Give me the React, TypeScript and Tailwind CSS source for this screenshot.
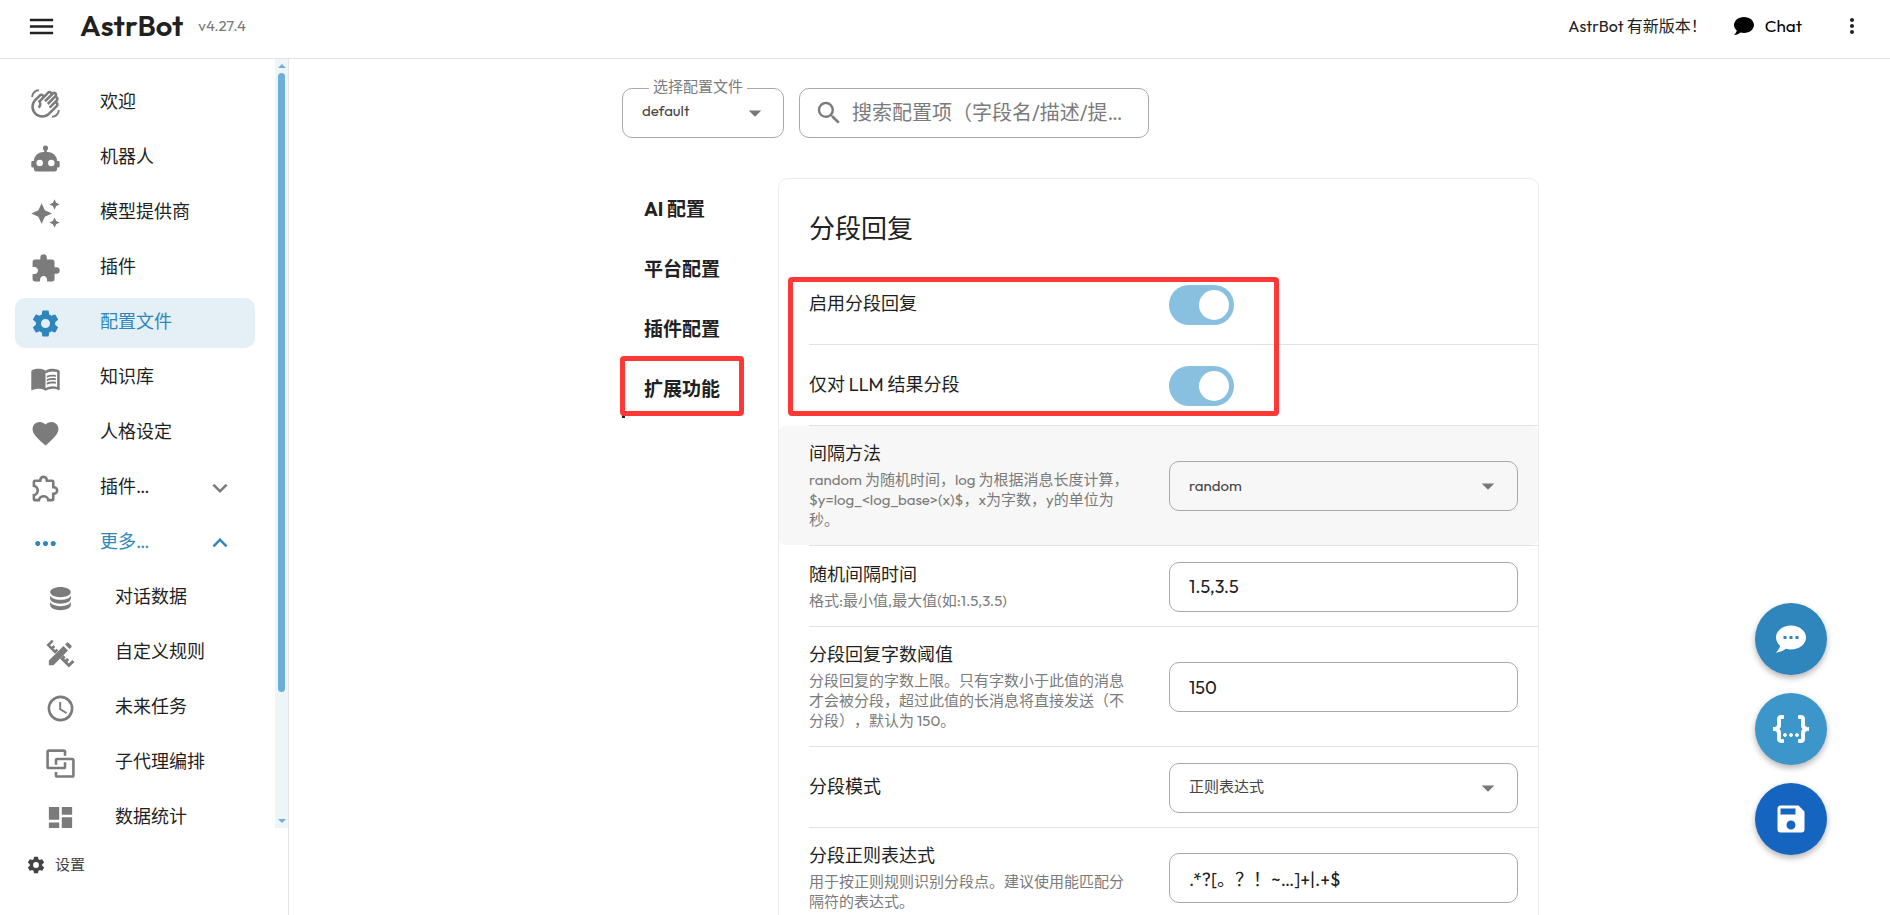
import { useState, type ReactNode } from "react";
import { MdOutlineWavingHand, MdMenuBook, MdFavorite, MdMoreHoriz, MdSearch, MdMoreVert } from "react-icons/md";

const ICONS = {
  menu: "M3,6H21V8H3V6M3,11H21V13H3V11M3,16H21V18H3V16Z",
  robot:
    "M12,2A2,2 0 0,1 14,4C14,4.74 13.6,5.39 13,5.73V7H14A7,7 0 0,1 21,14H22A1,1 0 0,1 23,15V18A1,1 0 0,1 22,19H21V20A2,2 0 0,1 19,22H5A2,2 0 0,1 3,20V19H2A1,1 0 0,1 1,18V15A1,1 0 0,1 2,14H3A7,7 0 0,1 10,7H11V5.73C10.4,5.39 10,4.74 10,4A2,2 0 0,1 12,2M7.5,13A2.5,2.5 0 0,0 5,15.5A2.5,2.5 0 0,0 7.5,18A2.5,2.5 0 0,0 10,15.5A2.5,2.5 0 0,0 7.5,13M16.5,13A2.5,2.5 0 0,0 14,15.5A2.5,2.5 0 0,0 16.5,18A2.5,2.5 0 0,0 19,15.5A2.5,2.5 0 0,0 16.5,13Z",
  creation:
    "M19,1L17.74,3.75L15,5L17.74,6.26L19,9L20.25,6.26L23,5L20.25,3.75M9,4L6.5,9.5L1,12L6.5,14.5L9,20L11.5,14.5L17,12L11.5,9.5M19,15L17.74,17.74L15,19L17.74,20.25L19,23L20.25,20.25L23,19L20.25,17.74",
  puzzle:
    "M20.5,11H19V7C19,5.89 18.1,5 17,5H13V3.5A2.5,2.5 0 0,0 10.5,1A2.5,2.5 0 0,0 8,3.5V5H4A2,2 0 0,0 2,7V10.8H3.5C5,10.8 6.2,12 6.2,13.5C6.2,15 5,16.2 3.5,16.2H2V20A2,2 0 0,0 4,22H7.8V20.5C7.8,19 9,17.8 10.5,17.8C12,17.8 13.2,19 13.2,20.5V22H17A2,2 0 0,0 19,20V16H20.5A2.5,2.5 0 0,0 23,13.5A2.5,2.5 0 0,0 20.5,11Z",
  puzzleOutline:
    "M22,13.5C22,15.26 20.7,16.72 19,16.96V20A2,2 0 0,1 17,22H13.2V21.7A2.7,2.7 0 0,0 10.5,19C9,19 7.8,20.21 7.8,21.7V22H4A2,2 0 0,1 2,20V16.2H2.3C3.79,16.2 5,15 5,13.5C5,12 3.79,10.8 2.3,10.8H2V7A2,2 0 0,1 4,5H7.04C7.28,3.3 8.74,2 10.5,2C12.26,2 13.72,3.3 13.96,5H17A2,2 0 0,1 19,7V10.04C20.7,10.28 22,11.74 22,13.5M17,15H18.5A1.5,1.5 0 0,0 20,13.5A1.5,1.5 0 0,0 18.5,12H17V7H12V5.5A1.5,1.5 0 0,0 10.5,4A1.5,1.5 0 0,0 9,5.5V7H4V9.12C5.76,9.8 7,11.5 7,13.5C7,15.5 5.75,17.2 4,17.88V20H6.12C6.8,18.25 8.5,17 10.5,17C12.5,17 14.2,18.25 14.88,20H17V15Z",
  cog: "M12,15.5A3.5,3.5 0 0,1 8.5,12A3.5,3.5 0 0,1 12,8.5A3.5,3.5 0 0,1 15.5,12A3.5,3.5 0 0,1 12,15.5M19.43,12.97C19.47,12.65 19.5,12.33 19.5,12C19.5,11.67 19.47,11.34 19.43,11L21.54,9.37C21.73,9.22 21.78,8.95 21.66,8.73L19.66,5.27C19.54,5.05 19.27,4.96 19.05,5.05L16.56,6.05C16.04,5.66 15.5,5.32 14.87,5.07L14.5,2.42C14.46,2.18 14.25,2 14,2H10C9.75,2 9.54,2.18 9.5,2.42L9.13,5.07C8.5,5.32 7.96,5.66 7.44,6.05L4.95,5.05C4.73,4.96 4.46,5.05 4.34,5.27L2.34,8.73C2.21,8.95 2.27,9.22 2.46,9.37L4.57,11C4.53,11.34 4.5,11.67 4.5,12C4.5,12.33 4.53,12.65 4.57,12.97L2.46,14.63C2.27,14.78 2.21,15.05 2.34,15.27L4.34,18.73C4.46,18.95 4.73,19.03 4.95,18.95L7.44,17.94C7.96,18.34 8.5,18.68 9.13,18.93L9.5,21.58C9.54,21.82 9.75,22 10,22H14C14.25,22 14.46,21.82 14.5,21.58L14.87,18.93C15.5,18.67 16.04,18.34 16.56,17.94L19.05,18.95C19.27,19.03 19.54,18.95 19.66,18.73L21.66,15.27C21.78,15.05 21.73,14.78 21.54,14.63L19.43,12.97Z",
  database:
    "M12,3C7.58,3 4,4.79 4,7C4,9.21 7.58,11 12,11C16.42,11 20,9.21 20,7C20,4.79 16.42,3 12,3M4,9V12C4,14.21 7.58,16 12,16C16.42,16 20,14.21 20,12V9C20,11.21 16.42,13 12,13C7.58,13 4,11.21 4,9M4,14V17C4,19.21 7.58,21 12,21C16.42,21 20,19.21 20,17V14C20,16.21 16.42,18 12,18C7.58,18 4,16.21 4,14Z",
  clock:
    "M12,20A8,8 0 0,0 20,12A8,8 0 0,0 12,4A8,8 0 0,0 4,12A8,8 0 0,0 12,20M12,2A10,10 0 0,1 22,12A10,10 0 0,1 12,22C6.47,22 2,17.5 2,12A10,10 0 0,1 12,2M12.5,7V12.25L17,14.92L16.25,16.15L11,13V7H12.5Z",
  dashboard: "M13,3V9H21V3M13,21H21V11H13M3,21H11V15H3M3,13H11V3H3V13Z",
  chevronDown: "M7.41,8.58L12,13.17L16.59,8.58L18,10L12,16L6,10L7.41,8.58Z",
  chevronUp: "M7.41,15.41L12,10.83L16.59,15.41L18,14L12,8L6,14L7.41,15.41Z",
  caret: "M7,10L12,15L17,10H7Z",
  chat: "M12,3C17.5,3 22,6.58 22,11C22,15.42 17.5,19 12,19C10.76,19 9.57,18.82 8.47,18.5C5.55,21 2,21 2,21C4.33,18.67 4.7,17.1 4.75,16.5C3.05,15.07 2,13.13 2,11C2,6.58 6.5,3 12,3Z",
  chatDots:
    "M12,3C17.5,3 22,6.58 22,11C22,15.42 17.5,19 12,19C10.76,19 9.57,18.82 8.47,18.5C5.55,21 2,21 2,21C4.33,18.67 4.7,17.1 4.75,16.5C3.05,15.07 2,13.13 2,11C2,6.58 6.5,3 12,3M17,12V10H15V12H17M13,12V10H11V12H13M9,12V10H7V12H9Z",
  json: "M5,3H7V5H5V10A2,2 0 0,1 3,12A2,2 0 0,1 5,14V19H7V21H5C3.93,20.73 3,20.1 3,19V15A2,2 0 0,0 1,13H0V11H1A2,2 0 0,0 3,9V5A2,2 0 0,1 5,3M19,3A2,2 0 0,1 21,5V9A2,2 0 0,0 23,11H24V13H23A2,2 0 0,0 21,15V19A2,2 0 0,1 19,21H17V19H19V14A2,2 0 0,1 21,12A2,2 0 0,1 19,10V5H17V3H19M12,15A1,1 0 0,1 13,16A1,1 0 0,1 12,17A1,1 0 0,1 11,16A1,1 0 0,1 12,15M8,15A1,1 0 0,1 9,16A1,1 0 0,1 8,17A1,1 0 0,1 7,16A1,1 0 0,1 8,15M16,15A1,1 0 0,1 17,16A1,1 0 0,1 16,17A1,1 0 0,1 15,16A1,1 0 0,1 16,15Z",
  save: "M15,9H5V5H15M12,19A3,3 0 0,1 9,16A3,3 0 0,1 12,13A3,3 0 0,1 15,16A3,3 0 0,1 12,19M17,3H5C3.89,3 3,3.9 3,5V19A2,2 0 0,0 5,21H19A2,2 0 0,0 21,19V7L17,3Z",
};

function Icon({ name, className }: { name: keyof typeof ICONS; className: string }) {
  return (
    <svg viewBox="0 0 24 24" className={className} fill="currentColor" aria-hidden="true">
      <path d={ICONS[name]} />
    </svg>
  );
}

function LinkedSquares() {
  return (
    <svg viewBox="0 0 24 24" className="size-[31px]" fill="none" stroke="currentColor" strokeWidth="2" aria-hidden="true">
      <path d="M15.5 6V3a1 1 0 0 0-1-1H3a1 1 0 0 0-1 1v11.5a1 1 0 0 0 1 1h11.5a1 1 0 0 0 1-1V11" />
      <path d="M8.500 13V9.500a1 1 0 0 1 1-1H21a1 1 0 0 1 1 1V21a1 1 0 0 1-1 1H9.500a1 1 0 0 1-1-1v-2.500" />
    </svg>
  );
}

function PencilRuler() {
  return (
    <svg viewBox="0 0 24 24" className="size-[31px]" fill="currentColor" aria-hidden="true">
      <path d="M3 17.500L14.300 6.200L17.800 9.700L6.500 21H3Z" />
      <path d="M15.500 5L16.900 3.600Q17.500 3 18.100 3.600L20.400 5.900Q21 6.500 20.400 7.100L19 8.500Z" />
      <g fill="none" stroke="currentColor" strokeWidth="2">
        <path d="M6 2L2.500 5.500L7.800 10.800L9.600 9M5.200 8.200L7.200 6.200" />
        <path d="M15.200 14.200L13.300 16.100L18.500 21.300L22 17.800M15.700 18.500L17.900 16.300" strokeWidth="2.300" />
      </g>
    </svg>
  );
}

const big = "size-[31px]";

type Item = { label: string; icon: ReactNode; active?: boolean; chevron?: "up" | "down"; sub?: boolean };

const items: Item[] = [
  { label: "欢迎", icon: <MdOutlineWavingHand className={big} /> },
  { label: "机器人", icon: <Icon name="robot" className={big} /> },
  { label: "模型提供商", icon: <Icon name="creation" className={big} /> },
  { label: "插件", icon: <Icon name="puzzle" className={big} /> },
  { label: "配置文件", icon: <Icon name="cog" className={big} />, active: true },
  { label: "知识库", icon: <MdMenuBook className={big} /> },
  { label: "人格设定", icon: <MdFavorite className={big} /> },
  { label: "插件…", icon: <Icon name="puzzleOutline" className={big} />, chevron: "down" },
  { label: "更多…", icon: <MdMoreHoriz className={big} />, chevron: "up" },
  { label: "对话数据", icon: <Icon name="database" className={big} />, sub: true },
  { label: "自定义规则", icon: <PencilRuler />, sub: true },
  { label: "未来任务", icon: <Icon name="clock" className={big} />, sub: true },
  { label: "子代理编排", icon: <LinkedSquares />, sub: true },
  { label: "数据统计", icon: <Icon name="dashboard" className={big} />, sub: true },
];

function NavItem({ item }: { item: Item }) {
  const blue = item.active || item.chevron === "up";
  return (
    <li>
      <a
        href="#"
        className={`flex h-[50px] items-center rounded-[10px] pr-5 ${item.sub ? "pl-[30px]" : "pl-[15px]"} ${
          item.active ? "bg-[#e4eff6]" : ""
        } ${blue ? "text-[#2f86bd]" : "text-[#1f1f1f]"}`}
      >
        <span className={`w-[70px] shrink-0 ${blue ? "" : "text-[#7b7b7b]"}`}>{item.icon}</span>
        <span className="flex-1 pb-[2px] text-lg leading-6">{item.label}</span>
        {item.chevron === "down" && <Icon name="chevronDown" className="size-[30px] text-[#7b7b7b]" />}
        {item.chevron === "up" && <Icon name="chevronUp" className="size-[30px]" />}
      </a>
    </li>
  );
}

function Toggle({ id }: { id: string }) {
  const [on, setOn] = useState(true);
  return (
    <input
      id={id}
      type="checkbox"
      role="switch"
      checked={on}
      onChange={(e) => setOn(e.target.checked)}
      className="flex h-10 w-[65px] cursor-pointer appearance-none items-center rounded-full bg-[#bdbdbd] px-[5px] before:size-[30px] before:rounded-full before:bg-white checked:justify-end checked:bg-[#89bfdf]"
    />
  );
}

const box = "h-[50px] w-full rounded-[10px] border border-[#a9a9a9] bg-transparent";

function TextField({ id, value }: { id: string; value: string }) {
  return <input id={id} type="text" defaultValue={value} className={`${box} px-[19px] text-lg text-[#212121]`} />;
}

function SelectField({ id, value }: { id: string; value: string }) {
  return (
    <div className="relative">
      <select id={id} defaultValue={value} className={`${box} appearance-none px-[19px] text-[15px] text-[#444]`}>
        <option>{value}</option>
      </select>
      <Icon name="caret" className="pointer-events-none absolute top-[10px] right-[15px] size-[30px] text-[#777]" />
    </div>
  );
}

function Row({ id, label, desc, shaded, children }: { id: string; label: string; desc?: string; shaded?: boolean; children: ReactNode }) {
  return (
    <>
      <div className={`flex min-h-20 items-center justify-between rounded-md pt-4 pb-[15px] pr-5 pl-[30px] ${shaded ? "bg-[#f7f7f7]" : ""}`}>
        <div className="w-[324px]">
          <label htmlFor={id} className={`block text-lg leading-6 text-[#1f1f1f] ${desc ? "" : "pb-[2px]"}`}>
            {label}
          </label>
          {desc && <p className="mt-1 text-[15px] leading-5 text-[#7b7b7b]">{desc}</p>}
        </div>
        <div className="-my-4 w-[349px]">{children}</div>
      </div>
      <div className="ml-[30px] h-px bg-[#e2e2e2]" />
    </>
  );
}

const tabs = ["AI 配置", "平台配置", "插件配置", "扩展功能"];

export default function App() {
  return (
    <div className="flex h-screen flex-col overflow-hidden bg-white font-['Outfit','Lato','Noto_Sans_CJK_SC',sans-serif] text-[#212121] [text-spacing-trim:space-all]">
      <header className="flex h-[59px] shrink-0 items-center border-b border-[#e3e3e3] pr-[26px] pb-[6px] pl-[26px]">
        <button aria-label="菜单">
          <Icon name="menu" className="size-[31px]" />
        </button>
        <h1 className="ml-[23px] text-[29px] leading-8 font-semibold">AstrBot</h1>
        <span className="ml-[15px] text-[15px] text-[#7b7b7b]">v4.27.4</span>
        <span className="ml-auto text-base">AstrBot 有新版本！</span>
        <a href="#" className="ml-[25px] flex items-center gap-[9px] text-[17px] text-black">
          <Icon name="chat" className="size-6" />
          Chat
        </a>
        <button aria-label="更多" className="ml-[38px]">
          <MdMoreVert className="size-6" />
        </button>
      </header>

      <div className="flex min-h-0 flex-1">
        <aside className="flex w-[289px] shrink-0 flex-col border-r border-[#e3e3e3]">
          <div className="flex min-h-0 flex-1">
            <nav className="flex-1 overflow-hidden pt-[19px] pr-5 pl-[15px]">
              <ul className="flex flex-col gap-[5px]">
                {items.map((item) => (
                  <NavItem key={item.label} item={item} />
                ))}
              </ul>
            </nav>
            <div className="flex w-[13px] flex-col items-center bg-[#edf5f9] py-[5px] text-[#6dafd9]">
              <svg viewBox="0 0 8 4" className="h-1 w-2" fill="currentColor" aria-hidden="true">
                <path d="M0 4L4 0L8 4Z" />
              </svg>
              <div className="mt-[5px] mb-[127px] w-[7px] flex-1 rounded-full bg-[#6dafd9]" />
              <svg viewBox="0 0 8 4" className="h-1 w-2" fill="currentColor" aria-hidden="true">
                <path d="M0 0L4 4L8 0Z" />
              </svg>
            </div>
          </div>
          <div className="h-[87px] pt-[26px] pl-[26px]">
            <a href="#" className="flex items-center gap-[9px] text-[15px] text-[#444]">
              <Icon name="cog" className="size-5" />
              设置
            </a>
          </div>
        </aside>

        <main className="min-w-0 flex-1 overflow-hidden">
          <div className="mx-auto w-[935px] max-w-full pt-[29px]">
            <div className="flex gap-[15px]">
              <div className="relative w-[162px]">
                <select id="profile" defaultValue="default" className={`${box} appearance-none px-[19px] pb-[3px] text-[15px] text-[#444]`}>
                  <option>default</option>
                </select>
                <label htmlFor="profile" className="absolute -top-[11px] left-[27px] bg-white px-1 text-[15px] leading-5 whitespace-nowrap text-[#7b7b7b]">
                  选择配置文件
                </label>
                <Icon name="caret" className="pointer-events-none absolute top-[10px] right-[14px] size-[30px] text-[#777]" />
              </div>
              <label className={`${box} flex max-w-[350px] items-center gap-2 px-[14px]`}>
                <MdSearch className="size-[30px] shrink-0 text-[#7b7b7b]" aria-hidden="true" />
                <input
                  type="text"
                  aria-label="搜索配置项"
                  placeholder="搜索配置项（字段名/描述/提示）"
                  className="min-w-0 flex-1 text-[20px] text-ellipsis outline-none placeholder:text-[#7b7b7b]"
                />
              </label>
            </div>

            <div className="mt-10 flex pr-[18px]">
              <div className="w-[156px] shrink-0">
                {tabs.map((tab, i) => (
                  <div key={tab} className="relative">
                    <button
                      className={`h-[60px] w-full border-l-[3px] pt-[3px] pl-[19px] text-left text-[19px] font-bold ${i === 3 ? "border-[#212121]" : "border-transparent"}`}
                    >
                      {tab}
                    </button>
                    {i === 3 && <div className="pointer-events-none absolute -top-[2px] -left-[2px] h-[60px] w-[124px] rounded-[4px] border-[5px] border-[#fd3837]" />}
                  </div>
                ))}
              </div>
              <section className="min-w-0 flex-1 rounded-[10px] border border-[#ececec]">
                <h2 className="pt-[31px] pb-4 pl-[30px] text-[26px] leading-[38px]">分段回复</h2>
                <div className="relative">
                  <Row id="enable" label="启用分段回复">
                    <Toggle id="enable" />
                  </Row>
                  <Row id="llm" label="仅对 LLM 结果分段">
                    <Toggle id="llm" />
                  </Row>
                  <div className="pointer-events-none absolute top-[13px] left-[9px] h-[139px] w-[491px] rounded-[4px] border-[5px] border-[#fd3837]" />
                </div>
                <Row
                  id="method"
                  label="间隔方法"
                  desc="random 为随机时间，log 为根据消息长度计算，$y=log_<log_base>(x)$，x为字数，y的单位为秒。"
                  shaded
                >
                  <SelectField id="method" value="random" />
                </Row>
                <Row id="interval" label="随机间隔时间" desc="格式:最小值,最大值(如:1.5,3.5)">
                  <TextField id="interval" value="1.5,3.5" />
                </Row>
                <Row
                  id="threshold"
                  label="分段回复字数阈值"
                  desc="分段回复的字数上限。只有字数小于此值的消息才会被分段，超过此值的长消息将直接发送（不分段），默认为 150。"
                >
                  <TextField id="threshold" value="150" />
                </Row>
                <Row id="mode" label="分段模式">
                  <SelectField id="mode" value="正则表达式" />
                </Row>
                <Row id="regex" label="分段正则表达式" desc="用于按正则规则识别分段点。建议使用能匹配分隔符的表达式。">
                  <TextField id="regex" value=".*?[。？！~…]+|.+$" />
                </Row>
              </section>
            </div>
          </div>
        </main>
      </div>

      <div className="fixed right-[63px] bottom-[60px] flex flex-col gap-[18px] text-white">
        <button aria-label="对话" className="flex size-[72px] items-center justify-center rounded-full bg-[#2f86bd] shadow-[0_3px_6px_rgba(0,0,0,0.3)]">
          <Icon name="chatDots" className="size-9" />
        </button>
        <button aria-label="编辑 JSON" className="flex size-[72px] items-center justify-center rounded-full bg-[#3c96ca] shadow-[0_3px_6px_rgba(0,0,0,0.3)]">
          <Icon name="json" className="size-9 stroke-current stroke-[0.6]" />
        </button>
        <button aria-label="保存" className="flex size-[72px] items-center justify-center rounded-full bg-[#1565c0] shadow-[0_3px_6px_rgba(0,0,0,0.3)]">
          <Icon name="save" className="size-9" />
        </button>
      </div>
    </div>
  );
}
